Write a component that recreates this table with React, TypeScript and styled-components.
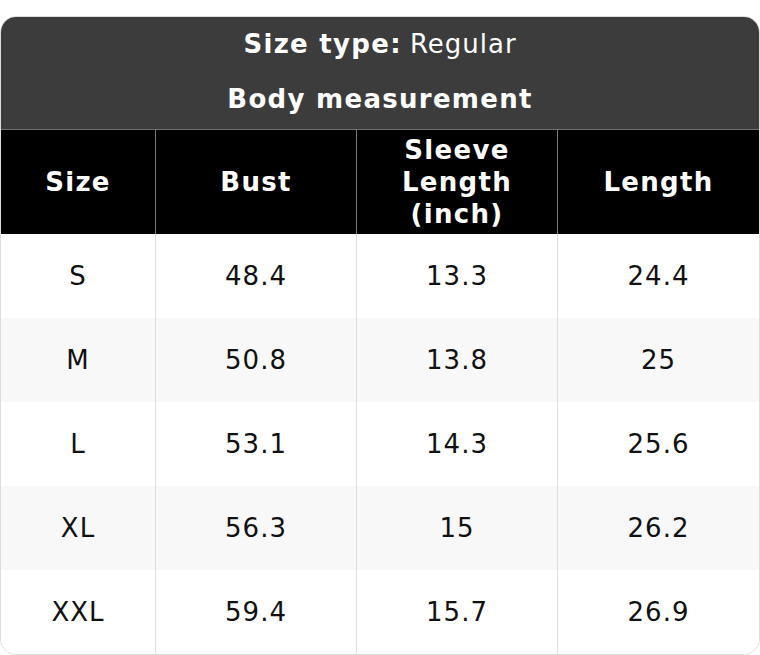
import React from 'react';
import styled, { createGlobalStyle } from 'styled-components';

const GlobalStyle = createGlobalStyle`
  html, body {
    margin: 0;
    padding: 0;
    background: #ffffff;
  }
  * {
    box-sizing: border-box;
  }
`;

const Page = styled.div`
  padding-top: 16px;
  font-family: 'DejaVu Sans', 'Liberation Sans', sans-serif;
`;

const Card = styled.div`
  width: 760px;
  border: 1px solid #dcdcdc;
  border-radius: 16px;
  overflow: hidden;
  background: #ffffff;
`;

const Banner = styled.div`
  background: #3c3c3c;
  color: #ffffff;
  display: flex;
  flex-direction: column;
  padding-bottom: 1px;
`;

const BannerLine = styled.div<{ $h: number }>`
  height: ${({ $h }) => $h}px;
  display: flex;
  align-items: center;
  justify-content: center;
  font-size: 26px;
  font-weight: 700;
  letter-spacing: 1.3px;
`;

const Light = styled.span`
  font-weight: 400;
  margin-left: 8px;
  letter-spacing: 1px;
`;

const Grid = styled.div`
  display: grid;
  grid-template-columns: 155px 201px 201px 1fr;
`;

const HeadCell = styled.div<{ $last?: boolean }>`
  height: 105px;
  background: #000000;
  color: #ffffff;
  font-weight: 700;
  font-size: 26px;
  line-height: 32px;
  letter-spacing: 1.3px;
  text-align: center;
  display: flex;
  align-items: center;
  justify-content: center;
  border-top: 1px solid #6e6e6e;
  border-right: ${({ $last }) => ($last ? 'none' : '1px solid #7a7a7a')};
  padding: 0 8px;
`;

const Cell = styled.div<{ $shade: boolean; $last?: boolean }>`
  height: 84px;
  background: ${({ $shade }) => ($shade ? '#f8f8f8' : '#ffffff')};
  color: #111111;
  font-size: 26px;
  letter-spacing: 1px;
  display: flex;
  align-items: center;
  justify-content: center;
  border-right: ${({ $last }) => ($last ? 'none' : '1px solid #dedede')};
`;

const headers = ['Size', 'Bust', 'Sleeve Length (inch)', 'Length'];

const rows = [
  ['S', '48.4', '13.3', '24.4'],
  ['M', '50.8', '13.8', '25'],
  ['L', '53.1', '14.3', '25.6'],
  ['XL', '56.3', '15', '26.2'],
  ['XXL', '59.4', '15.7', '26.9'],
];

export default function App() {
  return (
    <Page>
      <GlobalStyle />
      <Card>
        <Banner>
          <BannerLine $h={53}>
            Size type:<Light>Regular</Light>
          </BannerLine>
          <BannerLine $h={58}>Body measurement</BannerLine>
        </Banner>
        <Grid>
          {headers.map((h, i) => (
            <HeadCell key={h} $last={i === headers.length - 1}>
              {h}
            </HeadCell>
          ))}
          {rows.map((row, r) =>
            row.map((v, c) => (
              <Cell key={`${r}-${c}`} $shade={r % 2 === 1} $last={c === row.length - 1}>
                {v}
              </Cell>
            ))
          )}
        </Grid>
      </Card>
    </Page>
  );
}
